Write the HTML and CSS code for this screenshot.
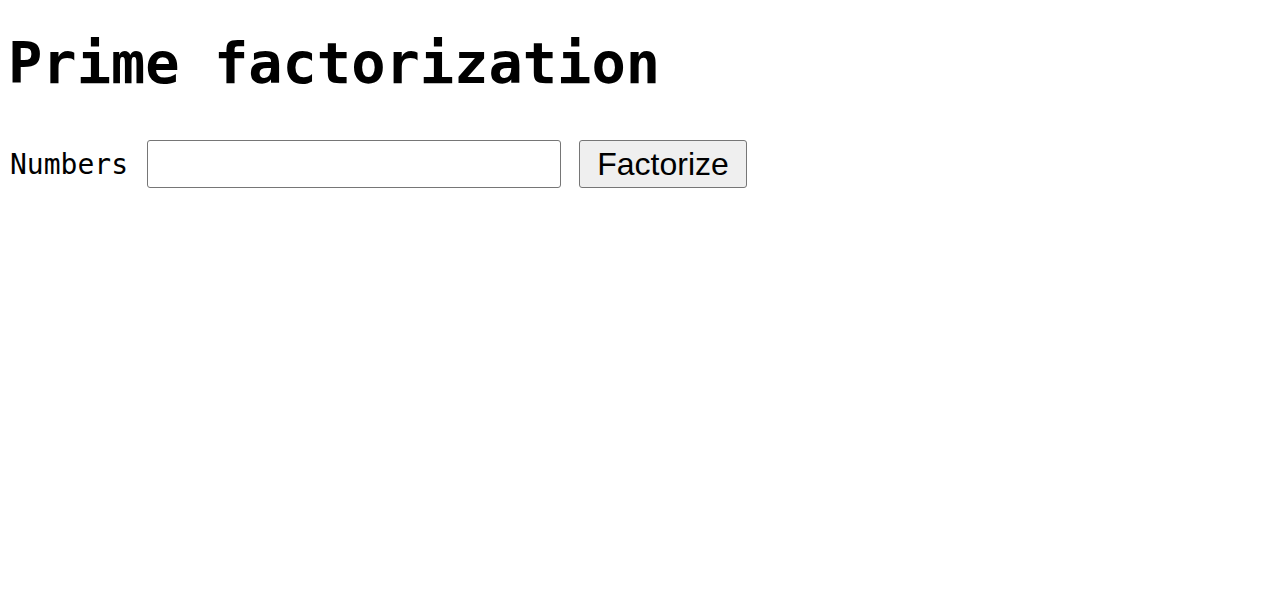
FILE: index.html
```html
<!DOCTYPE html>
<html>
<head>
<meta charset="utf-8">
<link rel="stylesheet" href="styles.css">
</head>
<body>
<h1 class="title">Prime factorization</h1>
<form class="form">
  <label class="label" for="numbers">Numbers</label>
  <input class="input" id="numbers" type="text">
  <button class="button" type="button">Factorize</button>
</form>
</body>
</html>
```
FILE: styles.css
```css
body {
  margin: 8px;
  font-family: "DejaVu Sans Mono", monospace;
  background: #fff;
  color: #000;
}
.title {
  font-family: "DejaVu Sans Mono", monospace;
  font-weight: bold;
  font-size: 57px;
  margin: 21px 0 43px 0;
  line-height: 1.2;
}
.form {
  display: flex;
  align-items: center;
  gap: 18px;
  padding-left: 2px;
}
.label {
  font-size: 28px;
  margin-right: 1px;
}
.input {
  box-sizing: border-box;
  width: 414px;
  height: 48px;
  border: 1px solid #767676;
  border-radius: 3px;
  margin: 0;
  padding: 2px 6px;
  font-size: 28px;
}
.button {
  box-sizing: border-box;
  width: 168px;
  height: 48px;
  border: 1px solid #767676;
  border-radius: 3px;
  background: #efefef;
  margin: 0;
  padding: 0;
  font-family: "Liberation Sans", Arial, sans-serif;
  font-size: 32px;
  color: #000;
}
```
